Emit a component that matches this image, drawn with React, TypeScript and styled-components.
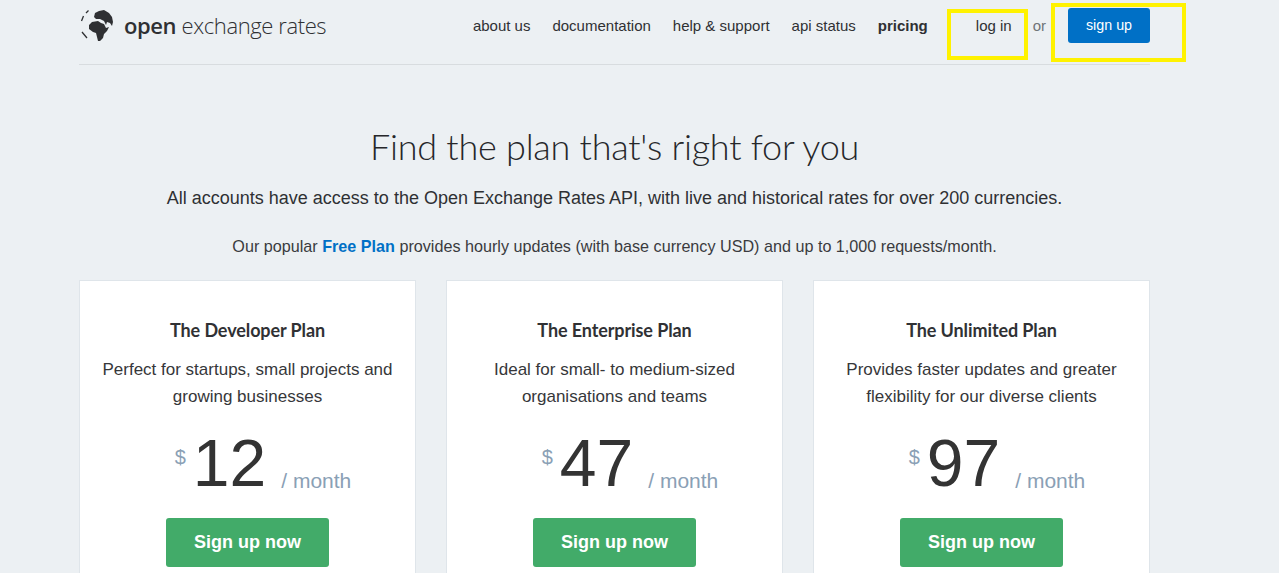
import styled, { createGlobalStyle } from "styled-components";

const GlobalStyle = createGlobalStyle`
    html, body {
        margin: 0;
        padding: 0;
        height: 100%;
        overflow: hidden;
        background-color: #ecf0f3;
        color: #2f3033;
        font-family: "Liberation Sans", Arial, sans-serif;
    }
`

const Page = styled.div`
    position: relative;
    width: 1071px;
    margin-left: 79px;
`

const Header = styled.header`
    height: 64px;
    border-bottom: 1px solid #d8dcdf;
    display: flex;
    justify-content: space-between;
`

const Brand = styled.a`
    display: flex;
    align-items: center;
    gap: 11px;
    height: 50px;
    font-family: "Open Sans", sans-serif;
    font-size: 22px;
    letter-spacing: -0.4px;
    color: #2f3033;
    b { font-weight: 600; }
    span { font-weight: 300; }
`

const Nav = styled.nav`
    display: flex;
    align-items: flex-start;
    font-size: 15px;
`

const NavLink = styled.a<{ $bold?: boolean; $gap?: number }>`
    margin-left: ${(p) => p.$gap ?? 22}px;
    line-height: 52px;
    color: #2f3033;
    font-weight: ${(p) => (p.$bold ? 700 : 400)};
`

const Or = styled.span`
    margin-left: 21px;
    line-height: 52px;
    color: #6f7478;
`

const SignUp = styled.a`
    margin: 8px 0 0 22px;
    width: 82px;
    height: 35px;
    line-height: 35px;
    border-radius: 3px;
    font-size: 14.3px;
    background-color: #0070c6;
    color: #fff;
    text-align: center;
`

const Highlight = styled.div<{ $left: number; $top: number; $w: number; $h: number }>`
    position: absolute;
    left: ${(p) => p.$left}px;
    top: ${(p) => p.$top}px;
    width: ${(p) => p.$w}px;
    height: ${(p) => p.$h}px;
    box-sizing: border-box;
    border: 4px solid #fff200;
`

const Intro = styled.section`
    text-align: center;
    padding-top: 58px;
`

const Title = styled.h1`
    margin: 0;
    font-family: Lato, sans-serif;
    font-size: 36px;
    line-height: 46px;
    font-weight: 300;
    letter-spacing: -0.25px;
    color: #26272a;
`

const Lead = styled.p`
    margin: 16px 0 0;
    font-size: 18px;
    line-height: 26px;
`

const Sub = styled.p`
    margin: 23px 0 0;
    font-size: 16.17px;
    line-height: 24px;
    color: #3a3b3e;
    b { color: #0070c6; }
`

const Plans = styled.div`
    display: grid;
    grid-template-columns: repeat(3, 337px);
    column-gap: 30px;
    margin-top: 22px;
`

const Card = styled.article`
    box-sizing: border-box;
    height: 320px;
    background-color: #fff;
    border: 1px solid #dfe5ea;
    text-align: center;
    padding-top: 36px;
`

const PlanName = styled.h3`
    margin: 0;
    font-family: Lato, sans-serif;
    font-size: 18px;
    line-height: 26px;
    font-weight: 700;
    letter-spacing: -0.1px;
    color: #303134;
`

const PlanText = styled.p`
    margin: 13px 0 0;
    font-size: 17px;
    line-height: 27px;
    color: #36373a;
`

const Price = styled.div`
    display: flex;
    justify-content: center;
    align-items: flex-start;
    height: 74px;
    margin-top: 15px;
    padding-left: 31px;
    color: #8aa0b5;
`

const Currency = styled.span`
    font-size: 20px;
    line-height: 24px;
    margin: 20px 7px 0 0;
`

const Amount = styled.span`
    font-size: 66px;
    line-height: 74px;
    margin-top: 1px;
    color: #333;
`

const Period = styled.span`
    font-size: 21px;
    line-height: 24px;
    margin: 44px 0 0 15px;
`

const CardButton = styled.a`
    display: block;
    width: 163px;
    height: 49px;
    margin: 19px auto 0;
    line-height: 48px;
    border-radius: 3px;
    background-color: #42ab69;
    color: #fff;
    font-size: 18px;
    font-weight: 700;
`

const GlobeIcon = () => (
    <svg width="34" height="34" viewBox="0 0 34 34" fill="#2f3033" stroke="none">
        <path d="M15 9L16 5L20 3L25 2L30 5L33 9L34 14L33 18L31 15L28 14L27 17L25 13L21 11L17 11Z" />
        <path d="M13 14L19 13L22 15L25 16L27 20L30 19L28 23L25 26L24 30L21 33L19 33L18 29L17 25L14 24L10 21L10 17Z" />
        <path d="M9.500 2.500L7 5M4.500 8L2.500 13M3 24L8 30" fill="none" stroke="#2f3033" strokeWidth="1.300" />
    </svg>
)

const plans = [
    { name: "The Developer Plan", text: ["Perfect for startups, small projects and", "growing businesses"], price: 12 },
    { name: "The Enterprise Plan", text: ["Ideal for small- to medium-sized", "organisations and teams"], price: 47 },
    { name: "The Unlimited Plan", text: ["Provides faster updates and greater", "flexibility for our diverse clients"], price: 97 },
]

const App = () => {
    return (
        <Page>
            <GlobalStyle />
            <Header>
                <Brand>
                    <GlobeIcon />
                    <div><b>open</b> <span>exchange rates</span></div>
                </Brand>
                <Nav>
                    <NavLink>about us</NavLink>
                    <NavLink>documentation</NavLink>
                    <NavLink>help &amp; support</NavLink>
                    <NavLink>api status</NavLink>
                    <NavLink $bold>pricing</NavLink>
                    <NavLink $gap={48}>log in</NavLink>
                    <Or>or</Or>
                    <SignUp>sign up</SignUp>
                </Nav>
            </Header>
            <Highlight $left={868} $top={9} $w={81} $h={51} />
            <Highlight $left={972} $top={3} $w={135} $h={59} />
            <Intro>
                <Title>Find the plan that's right for you</Title>
                <Lead>All accounts have access to the Open Exchange Rates API, with live and historical rates for over 200 currencies.</Lead>
                <Sub>Our popular <b>Free Plan</b> provides hourly updates (with base currency USD) and up to 1,000 requests/month.</Sub>
            </Intro>
            <Plans>
                {plans.map((plan) => (
                    <Card key={plan.name}>
                        <PlanName>{plan.name}</PlanName>
                        <PlanText>{plan.text[0]}<br />{plan.text[1]}</PlanText>
                        <Price>
                            <Currency>$</Currency>
                            <Amount>{plan.price}</Amount>
                            <Period>/ month</Period>
                        </Price>
                        <CardButton>Sign up now</CardButton>
                    </Card>
                ))}
            </Plans>
        </Page>
    );
}

export default App;
